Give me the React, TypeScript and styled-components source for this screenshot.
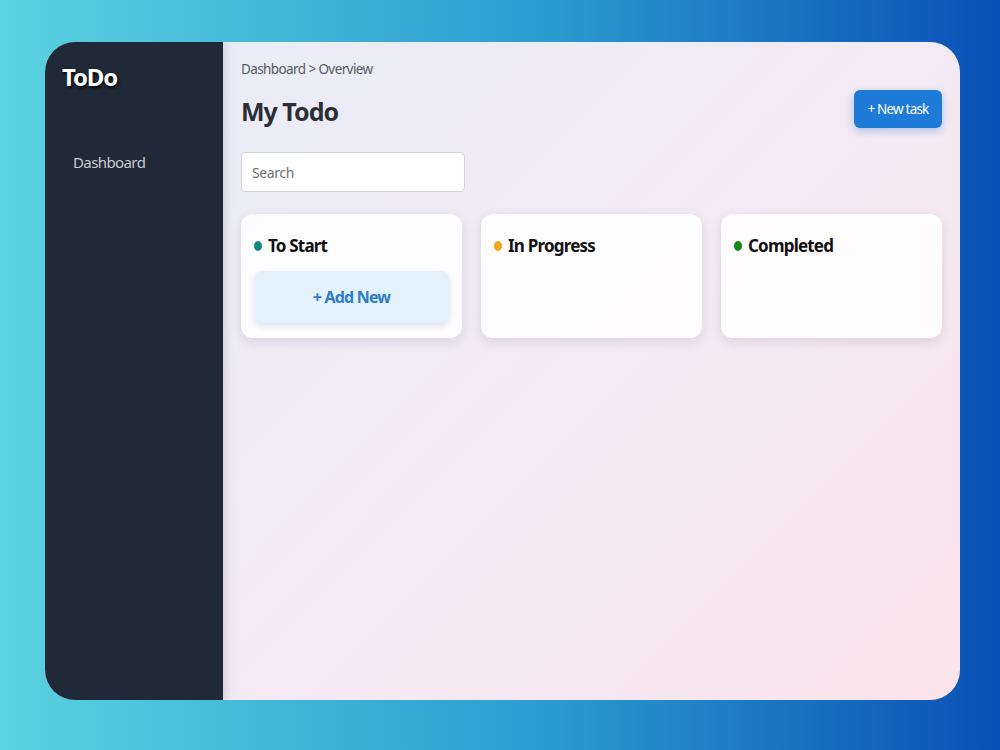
import React, { useState } from "react";
import styled, { createGlobalStyle } from "styled-components";

const GlobalStyle = createGlobalStyle`
  * { box-sizing: border-box; }
  html, body, #root { margin: 0; height: 100%; }
  body {
    font-family: "Noto Sans", "Open Sans", sans-serif;
    background: linear-gradient(90deg, #5bd2e1 0%, #2a9bd0 55%, #0a50b6 100%);
  }
`;

type Column = { title: string; color: string; canAdd?: boolean };

const columns: Column[] = [
  { title: "To Start", color: "#0f8a80", canAdd: true },
  { title: "In Progress", color: "#f5a516" },
  { title: "Completed", color: "#0e8a17" },
];

const App = () => {
  const [query, setQuery] = useState("");

  return (
    <>
      <GlobalStyle />
      <Page>
        <Shell>
          <Sidebar>
            <Logo>ToDo</Logo>
            <NavItem>Dashboard</NavItem>
          </Sidebar>
          <Main>
            <TopRow>
              <div>
                <Breadcrumb>Dashboard &gt; Overview</Breadcrumb>
                <Title>My Todo</Title>
              </div>
              <NewTaskButton type="button">+ New task</NewTaskButton>
            </TopRow>
            <SearchInput
              placeholder="Search"
              value={query}
              onChange={(e) => setQuery(e.target.value)}
            />
            <Board>
              {columns.map((col) => (
                <Card key={col.title}>
                  <CardHeader>
                    <Dot $color={col.color} />
                    {col.title}
                  </CardHeader>
                  {col.canAdd ? <AddButton type="button">+ Add New</AddButton> : null}
                </Card>
              ))}
            </Board>
          </Main>
        </Shell>
      </Page>
    </>
  );
};

export default App;

const Page = styled.div`
  height: 100%;
  padding: 42px 40px 50px 45px;
`;

const Shell = styled.div`
  display: flex;
  height: 100%;
  border-radius: 30px;
  overflow: hidden;
  background: linear-gradient(135deg, #e7edf9 0%, #f3eaf3 55%, #fbe3eb 100%);
`;

const Sidebar = styled.aside`
  width: 178px;
  flex-shrink: 0;
  background: #1f2937;
  padding: 18px 0 0 17px;
  box-shadow: 3px 0 8px rgba(0, 0, 0, 0.12);
`;

const Logo = styled.div`
  color: #ffffff;
  font-size: 24px;
  font-weight: 700;
  letter-spacing: -1.2px;
  text-shadow: 1px 2px 3px rgba(0, 0, 0, 0.9);
  margin-bottom: 59px;
`;

const NavItem = styled.div`
  color: #c7ccd4;
  font-size: 15px;
  letter-spacing: -0.6px;
  padding-left: 11px;
`;

const Main = styled.main`
  flex: 1;
  padding: 18px 18px 0 18px;
`;

const TopRow = styled.div`
  display: flex;
  justify-content: space-between;
  align-items: flex-start;
`;

const Breadcrumb = styled.div`
  font-size: 13.5px;
  color: #555b63;
  letter-spacing: -0.6px;
`;

const Title = styled.h1`
  margin: 16px 0 0;
  font-size: 25px;
  font-weight: 700;
  color: #2b2f36;
  letter-spacing: -1px;
`;

const NewTaskButton = styled.button`
  margin-top: 30px;
  width: 88px;
  height: 38px;
  border: none;
  border-radius: 6px;
  background: #1f7bd8;
  color: #ffffff;
  font-family: inherit;
  font-size: 13.5px;
  letter-spacing: -0.8px;
  box-shadow: 0 3px 8px rgba(31, 123, 216, 0.35);
  cursor: pointer;
`;

const SearchInput = styled.input`
  display: block;
  margin-top: 24px;
  width: 224px;
  height: 40px;
  padding: 0 10px;
  border: 1px solid #d0d4da;
  border-radius: 5px;
  background: #ffffff;
  font-family: inherit;
  font-size: 14px;
  letter-spacing: -0.4px;
  color: #333;
  outline: none;

  &::placeholder {
    color: #6b7078;
  }
`;

const Board = styled.div`
  display: grid;
  grid-template-columns: repeat(3, 1fr);
  gap: 19px;
  margin-top: 22px;
`;

const Card = styled.section`
  height: 124px;
  border-radius: 12px;
  background: rgba(255, 255, 255, 0.85);
  box-shadow: 0 4px 12px rgba(60, 60, 90, 0.12);
  padding: 20px 13px 0 13px;
`;

const CardHeader = styled.h3`
  display: flex;
  align-items: center;
  gap: 6px;
  margin: 0;
  font-size: 17px;
  font-weight: 700;
  color: #111;
  letter-spacing: -0.8px;
`;

const Dot = styled.span<{ $color: string }>`
  width: 8px;
  height: 10px;
  border-radius: 50%;
  background: ${(p) => p.$color};
`;

const AddButton = styled.button`
  display: block;
  width: 100%;
  height: 52px;
  margin-top: 14px;
  border: none;
  border-radius: 8px;
  background: #e3f1fc;
  color: #2e7dc9;
  font-family: inherit;
  font-size: 16px;
  font-weight: 700;
  letter-spacing: -0.8px;
  box-shadow: 0 3px 6px rgba(60, 80, 120, 0.15);
  cursor: pointer;
`;
